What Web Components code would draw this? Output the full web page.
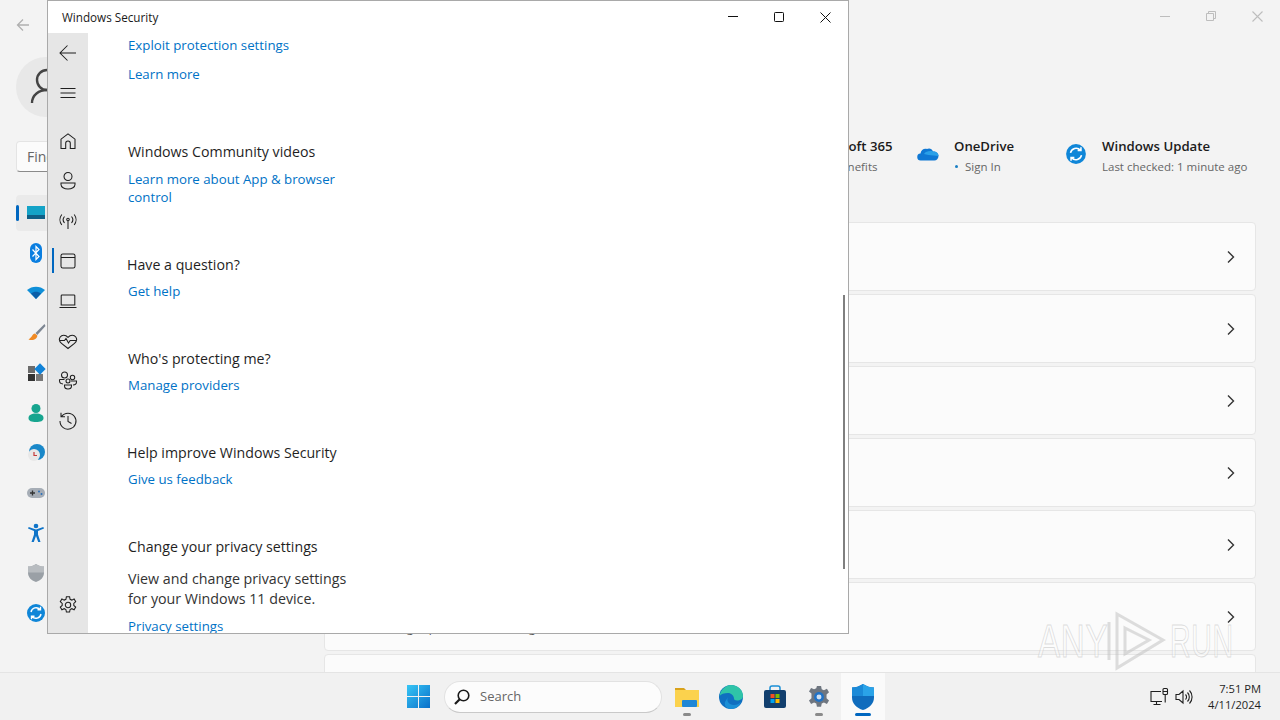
<!DOCTYPE html>
<html lang="en">
<head>
<meta charset="utf-8">
<title>Windows Security</title>
<style>
    html, body { margin: 0; height: 100%; overflow: hidden; background: #f3f3f3; }
    body { font-family: "Open Sans", "Noto Sans", sans-serif; }
</style>
</head>
<body>
<win-desktop>
    <settings-app>
        <set-tile slot="tiles" title="Microsoft 365" sub="View benefits" icon="none" style="width:87px"></set-tile>
        <set-tile slot="tiles" title="OneDrive" sub="Sign In" dot icon="onedrive" style="width:124px"></set-tile>
        <set-tile slot="tiles" title="Windows Update" sub="Last checked: 1 minute ago" icon="update" style="width:182px"></set-tile>
        <set-card slot="cards"></set-card>
        <set-card slot="cards"></set-card>
        <set-card slot="cards"></set-card>
        <set-card slot="cards"></set-card>
        <set-card slot="cards"></set-card>
        <set-card slot="cards" sub="Storage space, drives, configuration rules"></set-card>
        <set-card slot="cards" nochevron></set-card>
    </settings-app>
    <sec-window>
        <sec-section>
            <sec-link>Exploit protection settings</sec-link>
            <sec-link style="margin-top:11px">Learn more</sec-link>
        </sec-section>
        <sec-section heading="Windows Community videos" style="margin-top:59px">
            <sec-link style="margin-top:8px">Learn more about App &amp; browser control</sec-link>
        </sec-section>
        <sec-section heading="Have a question?" shift style="margin-top:49px">
            <sec-link>Get help</sec-link>
        </sec-section>
        <sec-section heading="Who's protecting me?" style="margin-top:49px">
            <sec-link>Manage providers</sec-link>
        </sec-section>
        <sec-section heading="Help improve Windows Security" shift style="margin-top:49px">
            <sec-link>Give us feedback</sec-link>
        </sec-section>
        <sec-section heading="Change your privacy settings" style="margin-top:49px">
            <sec-text>View and change privacy settings for your Windows 11 device.</sec-text>
            <sec-link style="margin-top:8px">Privacy settings</sec-link>
        </sec-section>
    </sec-window>
    <any-mark></any-mark>
    <win-taskbar></win-taskbar>
</win-desktop>

<script>
// stroke icons for the security sidebar, all on a 20x20 box
const navIcons = {
    back: '<path d="M18 10H2.500M9.500 2.500 2 10l7.500 7.500"/>',
    menu: '<path d="M2.500 5.500h15M2.500 10h15M2.500 14.500h15"/>',
    home: '<path d="M3 17.500V8.200L10 2.800l7 5.400v9.300h-4.700v-5.200a2.300 2.300 0 0 0-4.600 0v5.200z"/>',
    person: '<circle cx="10" cy="5.500" r="4"/><path d="M3 12h14v1.500c0 2.600-3.200 4.500-7 4.500s-7-1.900-7-4.500z"/>',
    wifi: '<circle cx="10" cy="8.500" r="1.300"/><path d="M10 10v8M6.500 5.500a5 5 0 0 0 0 6.500M13.500 5.500a5 5 0 0 1 0 6.500M3.800 3.500a8.500 8.500 0 0 0 0 10.500M16.200 3.500a8.500 8.500 0 0 1 0 10.500"/>',
    app: '<rect x="3" y="3" width="14" height="14" rx="1.800"/><path d="M3 6.500h14"/>',
    laptop: '<path d="M4 4h12a.8.8 0 0 1 .8.8V14H3.200V4.800A.8.8 0 0 1 4 4zM1.500 16.500h17"/>',
    heart: '<path d="M10 17.500 3.500 12.300C1.200 10.400 1 7.800 2.200 6 3.800 3.600 7.500 3.500 10 6.300c2.500-2.800 6.200-2.700 7.800-.3 1.200 1.800 1 4.400-1.300 6.300z"/><path d="M1.800 9.500h4.700l1.500-2 2.500 4.500 1.700-2.500h6.200"/>',
    family: '<circle cx="6.500" cy="4" r="3"/><circle cx="14.500" cy="6.500" r="2.200"/><circle cx="10" cy="10" r="2"/><path d="M6.500 14h7v1c0 1.700-1.600 3-3.500 3s-3.500-1.300-3.500-3zM1.500 8.500h5M1.500 8.500v1.300c0 1.500 1 3 3.500 3.200M13 10h5.500v1c0 1.300-1 2.800-3.500 3"/>',
    history: '<path d="M3.500 5.500A8 8 0 1 1 2 10M3 1.800v4h4M10 5v5.500l3.500 2"/>',
    gear: '<path d="M8.400 1.800h3.200l.5 2.500 1.700.8 2.300-1.100 1.600 2.700-1.900 1.700v2l1.900 1.700-1.600 2.700-2.300-1.100-1.700.8-.5 2.500H8.400l-.5-2.500-1.700-.8-2.300 1.100-1.600-2.700 1.900-1.700v-2L2.300 6.700l1.600-2.700 2.300 1.100 1.700-.8z"/><circle cx="10" cy="10" r="2.700"/>'
};

const searchIcon = '<svg width="18" height="18" viewBox="0 0 18 18" fill="none" stroke="#1a1a1a" stroke-width="1.600"><circle cx="10.500" cy="7.500" r="5.300"/><path d="M6.700 11.300 2 16" stroke-width="2.200"/></svg>';

// coloured icons of the settings category list
const categoryIcons = [
    '<rect x="1" y="3" width="18" height="13" fill="#14a3c7"/><rect x="1" y="12" width="18" height="4" fill="#0f5f86"/>',
    '<rect x="4" y="0" width="12" height="20" rx="6" fill="#0a7ee0"/><path d="M6.500 6.500l6.500 7-3 3V3.500l3 3-6.500 7" fill="none" stroke="#fff" stroke-width="1.200"/>',
    '<path d="M1 7C6 2.500 14 2.500 19 7L10 16z" fill="#0f8fd8"/><path d="M5 10.500C8 8 12 8 15 10.500L10 16z" fill="#0a5ea8"/>',
    '<path d="M18.500 1 9.500 10l1.800 2L19.500 3z" fill="#7d8692"/><path d="M9 10.500c-3 .5-2.500 3.500-6.500 6 4.500 1.500 9-.5 8.800-4z" fill="#f08a24"/>',
    '<rect x="2" y="3" width="7" height="7" fill="#6b6b6b"/><rect x="2" y="11" width="7" height="7" fill="#333"/><rect x="10" y="11" width="7" height="7" fill="#777"/><rect x="10" y="2" width="8" height="8" transform="rotate(45 14 6)" fill="#1183d8"/>',
    '<circle cx="10" cy="5.500" r="4.500" fill="#17a58f"/><path d="M2.500 15c0-3 3-4.500 7.500-4.500s7.500 1.500 7.500 4.500-3 4-7.500 4-7.500-1-7.500-4z" fill="#17a58f"/>',
    '<circle cx="11" cy="9" r="8" fill="#1a88c9"/><circle cx="8" cy="12" r="6" fill="#e8e8e8"/><path d="M8 9v3.500h3" fill="none" stroke="#c43b3b" stroke-width="1.200"/>',
    '<rect x="1" y="5" width="18" height="10" rx="5" fill="#a6adb6"/><path d="M4 10h5M6.500 7.500v5" stroke="#333" stroke-width="1.300"/><circle cx="13" cy="8.500" r="1" fill="#2a6fb8"/><circle cx="15.500" cy="11" r="1" fill="#2a6fb8"/>',
    '<circle cx="10" cy="3" r="2.300" fill="#0f74c8"/><path d="M2 5.500 8 8v3.500L5.500 19h2.300L10 13l2.200 6h2.300L12 11.500V8l6-2.500-.7-1.500L10 6.500 2.700 4z" fill="#0f74c8"/>',
    '<path d="M10 1c3 2 5 2.500 8 2.500v6C18 14 15 17.500 10 19 5 17.500 2 14 2 9.500v-6C5 3.500 7 3 10 1z" fill="#9aa0a6"/><path d="M10 1c3 2 5 2.500 8 2.500v6H2v-6C5 3.500 7 3 10 1z" fill="#b8bcc0"/>',
    '<circle cx="10" cy="10" r="9" fill="#0f86d8"/><path d="M5 9a5.200 5.200 0 0 1 9-2.500M15 11a5.200 5.200 0 0 1-9 2.500M14.500 3.800v3h-3M5.500 16.200v-3h3" fill="none" stroke="#fff" stroke-width="1.400"/>'
];

class WinDesktop extends HTMLElement {
    constructor() {
        super();
        this.attachShadow({ mode: 'open' }).innerHTML = `
            <style>
                :host { display: block; position: relative; width: 1280px; height: 720px; overflow: hidden; }
            </style>
            <slot></slot>`;
    }
}

class SetTile extends HTMLElement {
    constructor() {
        super();
        const icon = this.getAttribute('icon');
        const art = icon === 'onedrive'
            ? '<svg width="22" height="22" viewBox="0 0 22 22"><path d="M4 17.500a3.500 3.500 0 0 1-.5-7C4 7 7 5 10 6c1.500-1 5-1 6 2.500 3.500 0 5.500 2 5.500 4.500s-2 4.500-4 4.500z" fill="#0f78d4"/><path d="M7 11c2-3 6-3.500 9-2.500 3.500 0 5.500 2 5.500 4.500l-10-1z" fill="#2aa0e8"/></svg>'
            : icon === 'update'
                ? '<svg width="22" height="22" viewBox="0 0 20 20">' + categoryIcons[10] + '</svg>'
                : '';
        const dot = this.hasAttribute('dot') ? '<span class="dot"></span>' : '';
        this.attachShadow({ mode: 'open' }).innerHTML = `
            <style>
                :host { display: flex; gap: 15px; align-items: flex-start; box-sizing: border-box; flex: none; }
                .art { flex: none; width: 22px; height: 22px; margin-top: 6px; }
                .none { display: none; }
                .t { font-size: 13.200px; font-weight: 600; color: #1b1b1b; line-height: 18px; white-space: nowrap; }
                .s { font-size: 11.500px; color: #666; line-height: 18px; margin-top: 3px; white-space: nowrap; }
                .dot { display: inline-block; width: 3px; height: 3px; border-radius: 50%; background: #1a7fc4; margin: 0 7px 2px 1px; vertical-align: middle; }
            </style>
            <div class="art ${art ? '' : 'none'}">${art}</div>
            <div>
                <div class="t">${this.getAttribute('title')}</div>
                <div class="s">${dot}${this.getAttribute('sub')}</div>
            </div>`;
        this.removeAttribute('title');
    }
}

class SetCard extends HTMLElement {
    constructor() {
        super();
        const sub = this.getAttribute('sub');
        const chevron = this.hasAttribute('nochevron') ? '' :
            '<svg width="12" height="14" viewBox="0 0 12 14" fill="none" stroke="#333" stroke-width="1.400"><path d="M3 1.500 8.500 7 3 12.500"/></svg>';
        this.attachShadow({ mode: 'open' }).innerHTML = `
            <style>
                :host {
                    display: flex; align-items: center; justify-content: space-between; flex: none;
                    box-sizing: border-box; height: 69px; padding: 0 18px 0 52px;
                    background: #fbfbfb; border: 1px solid #e6e6e6; border-radius: 4px;
                }
                .s { font-size: 12px; color: #555; margin-top: 21px; white-space: nowrap; }
            </style>
            <div class="s">${sub || ''}</div>
            ${chevron}`;
    }
}

class SettingsApp extends HTMLElement {
    constructor() {
        super();
        const items = categoryIcons.map((art, i) => `
            <div class="item ${i === 0 ? 'on' : ''}">
                <svg width="20" height="20" viewBox="0 0 20 20">${art}</svg>
            </div>`).join('');
        this.attachShadow({ mode: 'open' }).innerHTML = `
            <style>
                :host { display: grid; grid-template-columns: 324px 1fr; height: 672px; background: #f3f3f3; overflow: hidden; }
                .left { padding: 17px 0 0 16px; position: relative; }
                .backarrow { display: block; margin-left: -1px; }
                .avatar { width: 60px; height: 60px; border-radius: 50%; background: #e8e8e8; margin-top: 24px; overflow: hidden; }
                .find {
                    box-sizing: border-box; width: 292px; height: 31px; margin-top: 24px; padding: 0 10px;
                    background: #fbfbfb; border: 1px solid #e4e4e4; border-bottom-color: #8a8a8a; border-radius: 4px;
                    font-size: 14px; line-height: 29px; color: #666;
                }
                .nav { margin-top: 23px; display: flex; flex-direction: column; gap: 4px; width: 292px; }
                .item { height: 36px; display: flex; align-items: center; padding-left: 10px; border-radius: 4px; position: relative; }
                .item.on { background: #eaeaea; }
                .item.on::before { content: ""; position: absolute; left: 0; top: 10px; width: 3px; height: 16px; background: #0067c0; border-radius: 2px; }
                .right { padding: 137px 24px 0 0; min-width: 0; display: flex; flex-direction: column; }
                .tiles { display: flex; justify-content: flex-end; gap: 24px; height: 60px; padding-right: 9px; }
                .cards { display: flex; flex-direction: column; gap: 3px; margin-top: 25px; }
                .controls { position: absolute; top: 0; right: 0; display: flex; }
                .controls div { width: 46px; height: 32px; display: flex; align-items: center; justify-content: center; }
            </style>
            <div class="left">
                <svg class="backarrow" width="16" height="16" viewBox="0 0 16 16" fill="none" stroke="#b0b0b0" stroke-width="1.300"><path d="M14 8H2.500M8 2.500 2.500 8 8 13.500"/></svg>
                <div class="avatar">
                    <svg width="60" height="60" viewBox="0 0 60 60" fill="none" stroke="#444" stroke-width="2.400"><circle cx="31" cy="23" r="10"/><path d="M16 46c0-8 7-13 15-13s15 5 15 13"/></svg>
                </div>
                <div class="find">Find a setting</div>
                <div class="nav">${items}</div>
            </div>
            <div class="right">
                <div class="tiles"><slot name="tiles"></slot></div>
                <div class="cards"><slot name="cards"></slot></div>
            </div>
            <div class="controls">
                <div><svg width="10" height="10" fill="none" stroke="#bdbdbd"><path d="M0 5.500h10"/></svg></div>
                <div><svg width="10" height="10" fill="none" stroke="#bdbdbd"><path d="M.5 2.500h7v7h-7zM2.500 2.500V.5h7v7H7.500"/></svg></div>
                <div><svg width="11" height="11" fill="none" stroke="#bdbdbd" stroke-width="1.100"><path d="M.5.500l10 10M10.500.5l-10 10"/></svg></div>
            </div>`;
    }
}

class SecNavItem extends HTMLElement {
    constructor() {
        super();
        const selected = this.hasAttribute('selected');
        this.attachShadow({ mode: 'open' }).innerHTML = `
            <style>
                :host { display: flex; width: 40px; height: 40px; align-items: center; justify-content: center; position: relative; flex: none; }
                svg { width: 20px; height: 20px; fill: none; stroke: #1f1f1f; stroke-width: 1.050; }
                .bar { position: absolute; left: 4px; top: 7px; width: 2px; height: 25px; background: #0067c0; }
            </style>
            ${selected ? '<div class="bar"></div>' : ''}
            <svg viewBox="0 0 20 20">${navIcons[this.getAttribute('icon')]}</svg>`;
    }
}

class SecWindow extends HTMLElement {
    constructor() {
        super();
        const top = ['person', 'wifi', 'app', 'laptop', 'heart', 'family', 'history'];
        this.attachShadow({ mode: 'open' }).innerHTML = `
            <style>
                :host {
                    display: flex; flex-direction: column; position: absolute; left: 47px; top: 0;
                    box-sizing: border-box; width: 802px; height: 634px;
                    background: #fff; border: 1px solid #a9a9a9;
                }
                .bar { display: flex; flex: none; height: 32px; align-items: center; justify-content: space-between; }
                .title { font-size: 11.700px; color: #1a1a1a; padding-left: 14px; }
                .ctl { display: flex; }
                .ctl div { width: 46px; height: 32px; display: flex; align-items: center; justify-content: center; }
                .body { flex: 1; display: flex; min-height: 0; }
                .side { width: 40px; flex: none; background: #e6e6e6; display: flex; flex-direction: column; padding-bottom: 8px; box-sizing: border-box; }
                .gap8 { height: 8px; flex: none; }
                .grow { flex: 1; }
                .main { flex: 1; overflow: hidden; padding: 3px 0 0 40px; position: relative; }
                .thumb { position: absolute; right: 3px; top: 262px; width: 2px; height: 274px; background: #7f7f7f; }
            </style>
            <div class="bar">
                <div class="title">Windows Security</div>
                <div class="ctl">
                    <div><svg width="10" height="10" fill="none" stroke="#111"><path d="M0 4.500h10"/></svg></div>
                    <div><svg width="10" height="10" fill="none" stroke="#111"><rect x=".5" y=".5" width="9" height="9" rx=".8"/></svg></div>
                    <div><svg width="11" height="11" fill="none" stroke="#111"><path d="M.5.500l10 10M10.500.5l-10 10"/></svg></div>
                </div>
            </div>
            <div class="body">
                <div class="side">
                    <sec-nav-item icon="back"></sec-nav-item>
                    <sec-nav-item icon="menu"></sec-nav-item>
                    <div class="gap8"></div>
                    <sec-nav-item icon="home"></sec-nav-item>
                    ${top.map(n => `<sec-nav-item icon="${n}" ${n === 'app' ? 'selected' : ''}></sec-nav-item>`).join('')}
                    <div class="grow"></div>
                    <sec-nav-item icon="gear"></sec-nav-item>
                </div>
                <div class="main">
                    <slot></slot>
                    <div class="thumb"></div>
                </div>
            </div>`;
    }
}

class SecSection extends HTMLElement {
    constructor() {
        super();
        const heading = this.getAttribute('heading');
        this.attachShadow({ mode: 'open' }).innerHTML = `
            <style>
                :host { display: block; width: 240px; }
                .h { font-size: 14.200px; line-height: 20px; color: #1f1f1f; white-space: nowrap; margin-bottom: 7px; }
                :host([shift]) .h { margin-left: -1px; }
            </style>
            ${heading ? `<div class="h">${heading}</div>` : ''}
            <slot></slot>`;
    }
}

class SecLink extends HTMLElement {
    constructor() {
        super();
        this.attachShadow({ mode: 'open' }).innerHTML = `
            <style>
                :host { display: block; font-size: 13.250px; line-height: 18px; color: #0072c6; }
            </style>
            <slot></slot>`;
    }
}

class SecText extends HTMLElement {
    constructor() {
        super();
        this.attachShadow({ mode: 'open' }).innerHTML = `
            <style>
                :host { display: block; font-size: 14.250px; line-height: 20px; color: #333; margin-top: 12px; width: 230px; }
            </style>
            <slot></slot>`;
    }
}

class WinTaskbar extends HTMLElement {
    constructor() {
        super();
        this.attachShadow({ mode: 'open' }).innerHTML = `
            <style>
                :host {
                    display: flex; align-items: center; position: absolute; left: 0; right: 0; bottom: 0; height: 48px;
                    box-sizing: border-box; background: #f1f1f1; border-top: 1px solid #e4e4e4; padding: 0 19px 0 406px;
                }
                .logo { flex: none; width: 25px; height: 25px; }
                .search {
                    box-sizing: border-box; display: flex; align-items: center; gap: 9px; flex: none;
                    width: 218px; height: 32px; margin-left: 13px; padding: 0 0 2px 8px; border-radius: 16px;
                    background: #fcfcfc; border: 1px solid #e2e2e2; border-bottom-color: #c9c9c9;
                    font-size: 13px; color: #666;
                }
                .search svg { margin-top: 2px; }
                .apps { display: flex; margin-left: 3px; }
                .app { width: 44px; height: 47px; display: flex; align-items: center; justify-content: center; position: relative; }
                .app.on { background: #fafafa; }
                .app.open::after, .app.on::after {
                    content: ""; position: absolute; bottom: 4px; left: 18px; width: 8px; height: 3px; border-radius: 2px; background: #8a8a8a;
                }
                .app.on::after { left: 14px; width: 16px; background: #0067c0; }
                .tray { margin-left: auto; display: flex; align-items: center; }
                .clock { font-size: 11.200px; line-height: 16px; color: #1f1f1f; text-align: right; margin-left: 14px; }
            </style>
            <svg class="logo" viewBox="0 0 25 25">
                <defs><linearGradient id="wl" x1="0" y1="0" x2="1" y2="1"><stop offset="0" stop-color="#36c6f6"/><stop offset="1" stop-color="#0a6fc9"/></linearGradient></defs>
                <path fill="url(#wl)" d="M1 1h11v11H1zM13 1h11v11H13zM1 13h11v11H1zM13 13h11v11H13z"/>
            </svg>
            <div class="search">${searchIcon}<span>Search</span></div>
            <div class="apps">
                <div class="app open"><svg width="26" height="26" viewBox="0 0 26 26"><path d="M1 4h9l2 2h-11z" fill="#d9a21b"/><rect x="1" y="6" width="24" height="17" fill="#fbd24d"/><rect x="8" y="16" width="15" height="7" rx="1" fill="#1f87d6"/></svg></div>
                <div class="app"><svg width="26" height="26" viewBox="0 0 26 26"><circle cx="13" cy="13" r="12" fill="#0f6fc0"/><path d="M1.500 12C3 5 8 1 13 1c7 0 12 5 12 11 0 3-3 4.500-6 4.500-2 0-3-1-3-2 0-3-3-5.500-6-5.500-4 0-7 1-8.500 3z" fill="#2fc4a8"/><path d="M10 13c-2 4 1 8 6 8 3 0 5-1 7-3-2 5-6 7-10 7-4 0-7-3-6-7z" fill="#1a8fd6"/></svg></div>
                <div class="app"><svg width="26" height="26" viewBox="0 0 26 26"><path d="M8 6V4a2 2 0 0 1 2-2h6a2 2 0 0 1 2 2v2" fill="none" stroke="#1a8fd6" stroke-width="1.500"/><rect x="2" y="6" width="22" height="18" rx="2" fill="#123f6e"/><rect x="8.500" y="10" width="4" height="4" fill="#f25022"/><rect x="13.500" y="10" width="4" height="4" fill="#7fba00"/><rect x="8.500" y="15" width="4" height="4" fill="#00a4ef"/><rect x="13.500" y="15" width="4" height="4" fill="#ffb900"/></svg></div>
                <div class="app open"><svg width="26" height="26" viewBox="0 0 20 20"><path d="M8.400 1h3.200l.5 2.500 1.700.8 2.300-1.100 1.600 2.700-1.900 1.700v2.800l1.900 1.700-1.600 2.700-2.300-1.100-1.700.8-.5 2.500H8.400l-.5-2.500-1.700-.8-2.300 1.100-1.600-2.700 1.900-1.700V6.900L2.300 5.200l1.600-2.700 2.300 1.100 1.700-.8z" fill="#6e7680" transform="translate(0 .5)"/><circle cx="10" cy="10" r="3.800" fill="#2173c7"/><circle cx="10" cy="10" r="1.900" fill="#cfe0f2"/></svg></div>
                <div class="app on"><svg width="26" height="28" viewBox="0 0 26 28"><path d="M13 1c4 2.500 7 3.500 11 3.500v10c0 6-4.500 10.500-11 12.500C6.500 25 2 20.500 2 14.500v-10C6 4.500 9 3.500 13 1z" fill="#0f6cbd"/><path d="M13 1c4 2.500 7 3.500 11 3.500V13H13z" fill="#2aa3e8"/><path d="M13 1C9 3.500 6 4.500 2 4.500V13h11z" fill="#1b8ad8"/></svg></div>
            </div>
            <div class="tray">
                <svg width="20" height="20" viewBox="0 0 20 20" fill="none" stroke="#1f1f1f" stroke-width="1.100"><path d="M12 4.500H2v10h11M7.500 14.500v3M4.500 17.500h7"/><rect x="14" y="1.500" width="4.500" height="6" rx="1"/><path d="M14 4.500h4.500M16.200 7.500v8"/></svg>
                <svg style="margin-left:5px" width="20" height="20" viewBox="0 0 20 20" fill="none" stroke="#1f1f1f" stroke-width="1.100"><path d="M2 7.500h3L9 4v12l-4-3.500H2zM11.500 7.500a3.500 3.500 0 0 1 0 5M13.500 5.500a6.500 6.500 0 0 1 0 9M15.500 3.500a9.500 9.500 0 0 1 0 13"/></svg>
                <div class="clock">7:51 PM<br>4/11/2024</div>
            </div>`;
    }
}

class AnyMark extends HTMLElement {
    constructor() {
        super();
        this.attachShadow({ mode: 'open' }).innerHTML = `
            <style>
                :host { display: flex; align-items: center; position: absolute; left: 1038px; top: 608px; height: 66px; pointer-events: none; }
                .w { font: 400 46px/66px "Liberation Sans", sans-serif; letter-spacing: 1px; color: rgba(255,255,255,.4); -webkit-text-stroke: 1px rgba(190,190,190,.5); transform-origin: left center; transform: scaleX(.72); width: 62px; white-space: nowrap; }
                .w.r { transform: scaleX(.62); }
                svg { margin: 0 3px 0 5px; flex: none; }
            </style>
            <div class="w">ANY</div>
            <svg width="62" height="66" viewBox="0 0 62 66" fill="none" stroke="rgba(190,190,190,.5)" stroke-width="3"><path d="M4 14v38M12 6l46 26-46 28zM20 20l24 12-24 14z"/></svg>
            <div class="w r">RUN</div>`;
    }
}

customElements.define('win-desktop', WinDesktop);
customElements.define('set-tile', SetTile);
customElements.define('set-card', SetCard);
customElements.define('settings-app', SettingsApp);
customElements.define('sec-nav-item', SecNavItem);
customElements.define('sec-window', SecWindow);
customElements.define('sec-section', SecSection);
customElements.define('sec-link', SecLink);
customElements.define('sec-text', SecText);
customElements.define('win-taskbar', WinTaskbar);
customElements.define('any-mark', AnyMark);
</script>
</body>
</html>
